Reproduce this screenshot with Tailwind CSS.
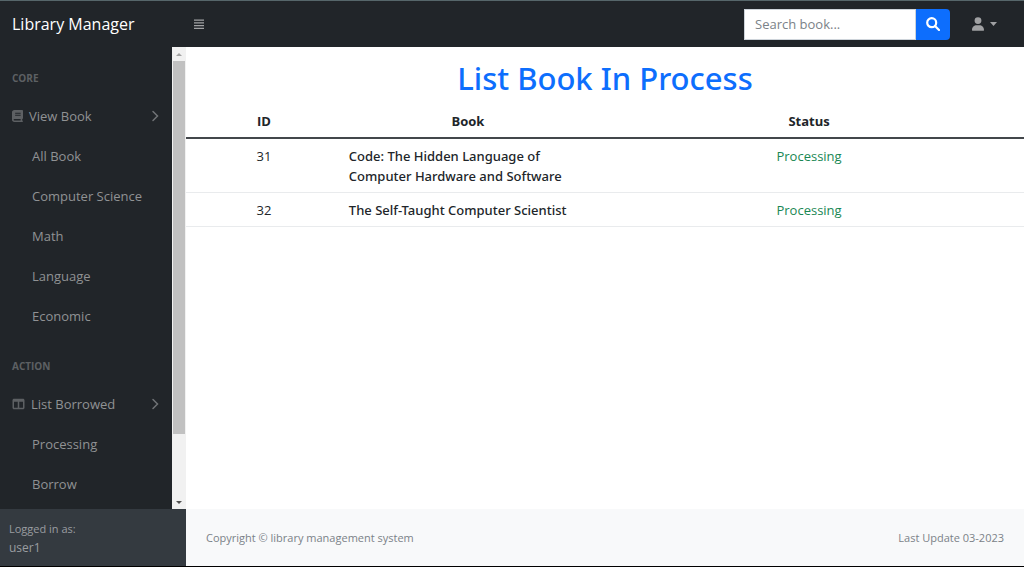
<!DOCTYPE html>
<html lang="en">
<head>
<meta charset="utf-8">
<meta name="viewport" content="width=device-width, initial-scale=1">
<title>Library Manager</title>
<script src="https://cdn.jsdelivr.net/npm/@tailwindcss/browser@4"></script>
</head>
<body class="flex h-screen flex-col overflow-hidden border-t border-b border-t-[#56666a] border-b-black bg-white font-['Open_Sans','Noto_Sans',sans-serif] text-[13px] leading-5 text-[#212529]">
<header class="flex h-[46px] shrink-0 items-center bg-[#212529]">
  <a href="#" class="w-[186px] shrink-0 pl-3 text-base text-white">Library Manager</a>
  <button type="button" aria-label="Toggle navigation" class="ml-[7px] text-[#a0a1a3]">
    <svg class="h-3 w-3" viewBox="0 0 12 12" fill="none" stroke="currentColor" stroke-width="1.300"><path d="M1 2.200h10M1 4.900h10M1 7.600h10M1 10.300h10"/></svg>
  </button>
  <form class="ml-auto flex h-[31px]">
    <input type="text" aria-label="Search book" placeholder="Search book..." class="w-[172px] border border-[#ced4da] bg-white px-[10px] text-[#212529] outline-none placeholder:text-[#7b8288]">
    <button type="button" aria-label="Search" class="flex w-[34px] items-center justify-center rounded-r bg-[#0d6efd] text-white">
      <svg class="h-[14px] w-[14px]" viewBox="0 0 14 14" fill="none" stroke="currentColor" stroke-width="2.200"><circle cx="5.700" cy="5.700" r="4.500"/><path d="M9 9l4 4" stroke-linecap="round"/></svg>
    </button>
  </form>
  <button type="button" aria-label="Account" class="mr-[27px] ml-[22px] flex items-center gap-[6px] text-[#a0a1a3]">
    <svg class="h-[14px] w-3" viewBox="0 0 448 512" fill="currentColor"><path d="M224 256a128 128 0 1 0 0-256 128 128 0 1 0 0 256zM174.300 304C78 304 0 382 0 478.300C0 497 14 512 32 512H416c18 0 32-15 32-33.700C448 382 370 304 273.700 304H174.300z"/></svg>
    <svg class="h-1 w-[7px]" viewBox="0 0 8 4" preserveAspectRatio="none" fill="currentColor"><path d="M0 0h8L4 4z"/></svg>
  </button>
</header>
<div class="flex min-h-0 flex-1">
  <aside class="flex w-[186px] shrink-0 flex-col bg-[#212529] text-[#909294]">
    <div class="flex min-h-0 flex-1">
      <nav class="min-w-0 flex-1 overflow-hidden pt-px">
        <h2 class="px-3 pt-[22px] pb-[10px] text-[10px] leading-4 font-bold text-[#5d6063]">CORE</h2>
        <a href="#" class="flex h-10 items-center pr-[13px] pl-3">
          <svg class="mr-[6px] h-3 w-[11px] text-[#5d6063]" viewBox="0 0 448 512" preserveAspectRatio="none" fill="currentColor"><path fill-rule="evenodd" d="M96 0C43 0 0 43 0 96V416c0 53 43 96 96 96H416c18 0 32-14 32-32s-14-32-32-32V384c18 0 32-14 32-32V32c0-18-14-32-32-32H96zm0 384H352v64H96c-18 0-32-14-32-32s14-32 32-32zm32-264H352v40H128zm0 84H352v40H128z"/></svg>
          View Book
          <svg class="ml-auto h-3 w-2 text-[#707376]" viewBox="0 0 8 12" fill="none" stroke="currentColor" stroke-width="1.500" stroke-linecap="round"><path d="M2 1.500 6.500 6 2 10.500"/></svg>
        </a>
        <a href="#" class="flex h-10 items-center pl-8">All Book</a>
        <a href="#" class="flex h-10 items-center pl-8">Computer Science</a>
        <a href="#" class="flex h-10 items-center pl-8">Math</a>
        <a href="#" class="flex h-10 items-center pl-8">Language</a>
        <a href="#" class="flex h-10 items-center pl-8">Economic</a>
        <h2 class="px-3 pt-[22px] pb-[10px] text-[10px] leading-4 font-bold text-[#5d6063]">ACTION</h2>
        <a href="#" class="flex h-10 items-center pr-[13px] pl-3">
          <svg class="mr-[6px] h-3 w-[13px] text-[#5d6063]" viewBox="0 0 512 512" fill="currentColor"><path d="M0 96C0 61 29 32 64 32H448c35 0 64 29 64 64V416c0 35-29 64-64 64H64c-35 0-64-29-64-64V96zm64 64V416H224V160H64zm384 0H288V416H448V160z"/></svg>
          List Borrowed
          <svg class="ml-auto h-3 w-2 text-[#707376]" viewBox="0 0 8 12" fill="none" stroke="currentColor" stroke-width="1.500" stroke-linecap="round"><path d="M2 1.500 6.500 6 2 10.500"/></svg>
        </a>
        <a href="#" class="flex h-10 items-center pl-8">Processing</a>
        <a href="#" class="flex h-10 items-center pl-8">Borrow</a>
      </nav>
      <div aria-hidden="true" class="flex w-[14px] shrink-0 flex-col items-center bg-[#f1f1f1]">
        <div class="flex h-[14px] shrink-0 items-center"><svg class="h-[3px] w-[6px]" viewBox="0 0 6 3" fill="#a3a3a3"><path d="M3 0 6 3H0z"/></svg></div>
        <div class="flex w-full flex-1 flex-col px-px"><div class="h-[86%] bg-[#c1c1c1]"></div></div>
        <div class="flex h-[14px] shrink-0 items-center"><svg class="h-[3px] w-[6px]" viewBox="0 0 6 3" fill="#505050"><path d="M0 0h6L3 3z"/></svg></div>
      </div>
    </div>
    <div class="h-[57px] shrink-0 bg-[#343a40] px-[9px] pt-[10px] text-[#9a9da0]">
      <div class="text-[11px] leading-[19px]">Logged in as:</div>
      <div class="text-xs leading-[19px]">user1</div>
    </div>
  </aside>
  <div class="flex min-w-0 flex-1 flex-col">
    <main class="min-h-0 flex-1">
      <h1 class="pt-[11px] pb-[7px] text-center font-['Noto_Sans',sans-serif] text-[31px] leading-10 font-medium text-[#0d6efd]">List Book In Process</h1>
      <table class="w-full table-fixed border-collapse">
        <colgroup><col class="w-[18.6%]"><col class="w-[30.1%]"><col></colgroup>
        <thead>
          <tr class="border-b-2 border-[#43474b]">
            <th scope="col" class="px-[7px] py-[6px] font-bold">ID</th>
            <th scope="col" class="px-[7px] py-[6px] font-bold">Book</th>
            <th scope="col" class="px-[7px] py-[6px] font-bold">Status</th>
          </tr>
        </thead>
        <tbody class="align-top">
          <tr class="border-b border-[#e9ebed]">
            <td class="px-[7px] pt-[7px] pb-[6px] text-center">31</td>
            <td class="px-[7px] pt-[7px] pb-[6px] font-['Noto_Sans',sans-serif] font-medium">Code: The Hidden Language of Computer Hardware and Software</td>
            <td class="px-[7px] pt-[7px] pb-[6px] text-center text-[#198754]">Processing</td>
          </tr>
          <tr class="border-b border-[#e9ebed]">
            <td class="px-[7px] pt-[7px] pb-[6px] text-center">32</td>
            <td class="px-[7px] pt-[7px] pb-[6px] font-['Noto_Sans',sans-serif] font-medium">The Self-Taught Computer Scientist</td>
            <td class="px-[7px] pt-[7px] pb-[6px] text-center text-[#198754]">Processing</td>
          </tr>
        </tbody>
      </table>
    </main>
    <footer class="flex h-[57px] shrink-0 items-center justify-between bg-[#f8f9fa] px-5 text-[11px] text-[#7b8288]">
      <div>Copyright © library management system</div>
      <div>Last Update 03-2023</div>
    </footer>
  </div>
</div>
</body>
</html>
